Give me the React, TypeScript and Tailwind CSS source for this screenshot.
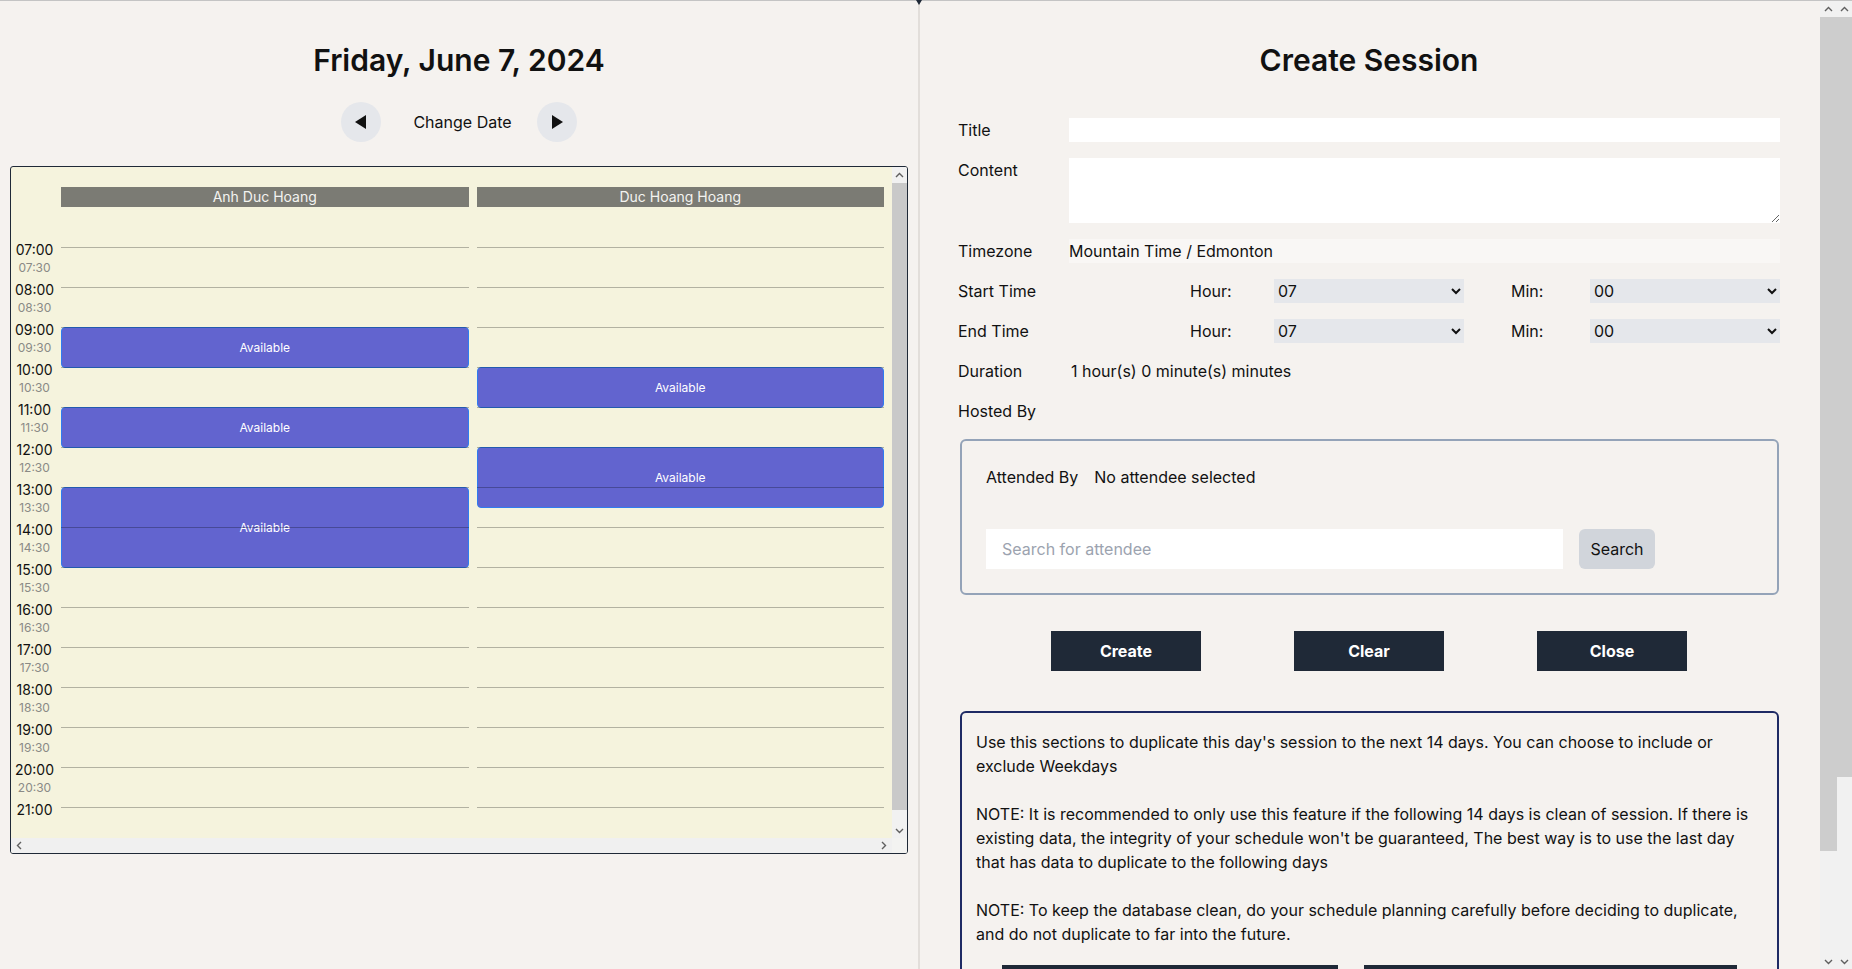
import React from "react";

type Ev = { s: number; e: number };

const HOURS = [7, 8, 9, 10, 11, 12, 13, 14, 15, 16, 17, 18, 19, 20, 21];
const START = 7;
const SLOT = 40;

const columns: { name: string; events: Ev[] }[] = [
  { name: "Anh Duc Hoang", events: [{ s: 9, e: 10 }, { s: 11, e: 12 }, { s: 13, e: 15 }] },
  { name: "Duc Hoang Hoang", events: [{ s: 10, e: 11 }, { s: 12, e: 13.5 }] },
];

const pad = (n: number) => (n < 10 ? "0" + n : "" + n);

function Chevron({ dir }: { dir: "up" | "down" | "left" | "right" }) {
  const pts =
    dir === "up"
      ? "1,6 4.5,2.5 8,6"
      : dir === "down"
      ? "1,3 4.5,6.5 8,3"
      : dir === "left"
      ? "6,1 2.5,4.5 6,8"
      : "3,1 6.5,4.5 3,8";
  return (
    <svg width="9" height="9" viewBox="0 0 9 9">
      <polyline points={pts} fill="none" stroke="#5f5f5f" strokeWidth="1.4" />
    </svg>
  );
}

function VScrollbar({ width, thumbEnd }: { width: string; thumbEnd: string }) {
  return (
    <div className={`${width} shrink-0 flex flex-col bg-[#f1f1f1]`}>
      <div className="h-4 shrink-0 flex items-center justify-center">
        <Chevron dir="up" />
      </div>
      <div className={`${thumbEnd} shrink-0 bg-[#cdcdcd]`} />
      <div className="flex-1" />
      <div className="h-4 shrink-0 flex items-center justify-center">
        <Chevron dir="down" />
      </div>
    </div>
  );
}

function Calendar() {
  return (
    <div className="self-stretch mx-[10px] mt-6 h-[688px] border border-[#1f2937] rounded-[3px] bg-[#f5f3dd] flex flex-col overflow-hidden">
      <div className="flex-1 min-h-0 flex">
        <div className="flex-1 min-w-0 overflow-hidden">
          <div className="pt-5 pr-2">
            <div className="flex">
              <div className="w-[50px] shrink-0" />
              <div className="flex-1 grid grid-cols-2 gap-2">
                {columns.map((c) => (
                  <div key={c.name} className="h-5 bg-[#7b7b74] text-[#f3f3f0] text-[14px] leading-5 text-center">
                    {c.name}
                  </div>
                ))}
              </div>
            </div>
            <div className="mt-10 flex">
              <div className="w-[50px] shrink-0 flex flex-col pr-[3px]">
                {HOURS.map((h) => (
                  <div key={h} className="h-10 flex flex-col items-center">
                    <div className="-mt-[6px] text-[14px] leading-[18px] text-[#111]">{pad(h)}:00</div>
                    {h !== 21 && (
                      <div className="mt-[2px] text-[12px] leading-[14px] text-[#8a8a86]">{pad(h)}:30</div>
                    )}
                  </div>
                ))}
              </div>
              <div className="flex-1 grid grid-cols-2 gap-2">
                {columns.map((c) => (
                  <div key={c.name} className="relative">
                    {c.events.map((ev, i) => (
                      <div
                        key={i}
                        className="absolute left-0 right-0 z-0 rounded-[4px] border border-[#2f7cf0] bg-[#6264cf] flex items-center justify-center text-[12px] text-white"
                        style={{ top: (ev.s - START) * SLOT, height: (ev.e - ev.s) * SLOT + 1 }}
                      >
                        Available
                      </div>
                    ))}
                    {HOURS.map((h) => (
                      <div
                        key={h}
                        className="relative z-10 h-10 border-t border-[rgba(0,0,0,0.27)] pointer-events-none"
                      />
                    ))}
                  </div>
                ))}
              </div>
            </div>
          </div>
        </div>
        <div className="w-[15px] shrink-0 flex flex-col bg-[#f1f1f1]">
          <div className="h-[16px] shrink-0 flex items-center justify-center">
            <Chevron dir="up" />
          </div>
          <div className="h-[627px] shrink-0 bg-[#c9c9c9]" />
          <div className="flex-1 flex items-end justify-center pb-[3px]">
            <Chevron dir="down" />
          </div>
        </div>
      </div>
      <div className="h-[15px] shrink-0 flex bg-[#f0f0f0]">
        <div className="flex-1 flex items-center justify-between px-[4px]">
          <Chevron dir="left" />
          <Chevron dir="right" />
        </div>
        <div className="w-[15px] shrink-0 bg-[#f3f3f1]" />
      </div>
    </div>
  );
}

function LeftPanel() {
  return (
    <div className="w-[918px] shrink-0 flex flex-col items-center pt-[41px]">
      <h1 className="text-[30px] leading-[36px] font-semibold text-[#111]">Friday, June 7, 2024</h1>
      <div className="mt-6 flex items-center">
        <button className="w-10 h-10 rounded-full bg-[#e5e7eb] flex items-center justify-center">
          <svg width="12" height="14" viewBox="0 0 12 14">
            <polygon points="11,0 11,14 0,7" fill="#111" />
          </svg>
        </button>
        <span className="ml-8 mr-[25px] text-base text-[#111]">Change Date</span>
        <button className="w-10 h-10 rounded-full bg-[#e5e7eb] flex items-center justify-center">
          <svg width="12" height="14" viewBox="0 0 12 14">
            <polygon points="1,0 1,14 12,7" fill="#111" />
          </svg>
        </button>
      </div>
      <Calendar />
    </div>
  );
}

function Label({ children }: { children: React.ReactNode }) {
  return <div className="w-[111px] shrink-0 leading-6 text-[#111]">{children}</div>;
}

function TimeRow({ label }: { label: string }) {
  return (
    <div className="flex items-center h-6">
      <div className="w-[232px] shrink-0 leading-6">{label}</div>
      <div className="w-[84px] shrink-0">Hour:</div>
      <select className="w-[190px] h-6 bg-[#e5e7eb] text-base" defaultValue="07">
        <option value="07">07</option>
      </select>
      <div className="w-[79px] ml-[47px] shrink-0">Min:</div>
      <select className="flex-1 h-6 bg-[#e5e7eb] text-base" defaultValue="00">
        <option value="00">00</option>
      </select>
    </div>
  );
}

function RightPanel() {
  return (
    <div className="flex-1 min-w-0 flex">
      <div className="flex-1 min-w-0 overflow-hidden">
        <div className="pl-[38px] pr-10 pt-[41px] pb-[66px] text-base text-[#111]">
          <h1 className="text-center text-[30px] leading-[36px] font-semibold">Create Session</h1>
          <div className="mt-10 flex flex-col gap-4">
            <div className="flex items-center">
              <Label>Title</Label>
              <input className="flex-1 h-6 bg-white" />
            </div>
            <div className="flex items-start">
              <Label>Content</Label>
              <textarea className="flex-1 h-[65px] bg-white block" />
            </div>
            <div className="flex items-center">
              <Label>Timezone</Label>
              <div className="flex-1 h-6 leading-6 bg-[#f9f7f5]">Mountain Time / Edmonton</div>
            </div>
            <TimeRow label="Start Time" />
            <TimeRow label="End Time" />
            <div className="flex items-center">
              <Label>Duration</Label>
              <div className="leading-6 pl-[2px]">1 hour(s) 0 minute(s) minutes</div>
            </div>
            <div className="flex items-center">
              <Label>Hosted By</Label>
            </div>
          </div>
          <div className="mt-4 ml-[2px] mr-px border-2 border-[#94a3b8] rounded-[6px] p-6">
            <div className="flex items-center leading-6">
              <span>Attended By</span>
              <span className="ml-4">No attendee selected</span>
            </div>
            <div className="mt-10 flex items-center gap-4">
              <input
                className="w-[577px] h-10 bg-white px-4 placeholder:text-[#9ca3af]"
                placeholder="Search for attendee"
              />
              <button className="w-[76px] h-10 rounded-[6px] bg-[#d1d5db]">Search</button>
            </div>
          </div>
          <div className="mt-9 flex justify-evenly">
            <button className="w-[150px] h-10 bg-[#1f2937] text-white font-bold">Create</button>
            <button className="w-[150px] h-10 bg-[#1f2937] text-white font-bold">Clear</button>
            <button className="w-[150px] h-10 bg-[#1f2937] text-white font-bold">Close</button>
          </div>
          <div className="mt-10 ml-[2px] mr-px border-2 border-[#1e2a64] rounded-[6px] px-[14px] pt-[17px] pb-4 leading-6">
            <p>
              Use this sections to duplicate this day's session to the next 14 days. You can choose to include or
              exclude Weekdays
            </p>
            <p className="mt-6">
              NOTE: It is recommended to only use this feature if the following 14 days is clean of session. If there
              is existing data, the integrity of your schedule won't be guaranteed, The best way is to use the last day
              that has data to duplicate to the following days
            </p>
            <p className="mt-6">
              NOTE: To keep the database clean, do your schedule planning carefully before deciding to duplicate, and
              do not duplicate to far into the future.
            </p>
            <div className="mt-[19px] flex justify-evenly">
              <button className="w-[336px] h-10 bg-[#1f2937]" aria-label="Duplicate excluding weekends" />
              <button className="w-[373px] h-10 bg-[#1f2937]" aria-label="Duplicate including weekends" />
            </div>
          </div>
        </div>
      </div>
      <VScrollbar width="w-[17px]" thumbEnd="h-[834px]" />
    </div>
  );
}

export default function App() {
  return (
    <div className="h-screen flex flex-col bg-[#f5f2ef] font-['Inter',sans-serif] text-[#111] overflow-hidden">
      <div className="h-px shrink-0 bg-[#c4c4c4]" />
      <div className="flex-1 min-h-0 flex">
        <div className="flex-1 min-w-0 flex">
          <LeftPanel />
          <div className="relative w-[2px] shrink-0 bg-[#e2deda]">
            <svg className="absolute -top-px -left-[2px]" width="6" height="5" viewBox="0 0 6 5">
              <polygon points="0,0 6,0 3,5" fill="#1f2937" />
            </svg>
          </div>
          <RightPanel />
        </div>
        <VScrollbar width="w-[15px]" thumbEnd="h-[760px]" />
      </div>
    </div>
  );
}
